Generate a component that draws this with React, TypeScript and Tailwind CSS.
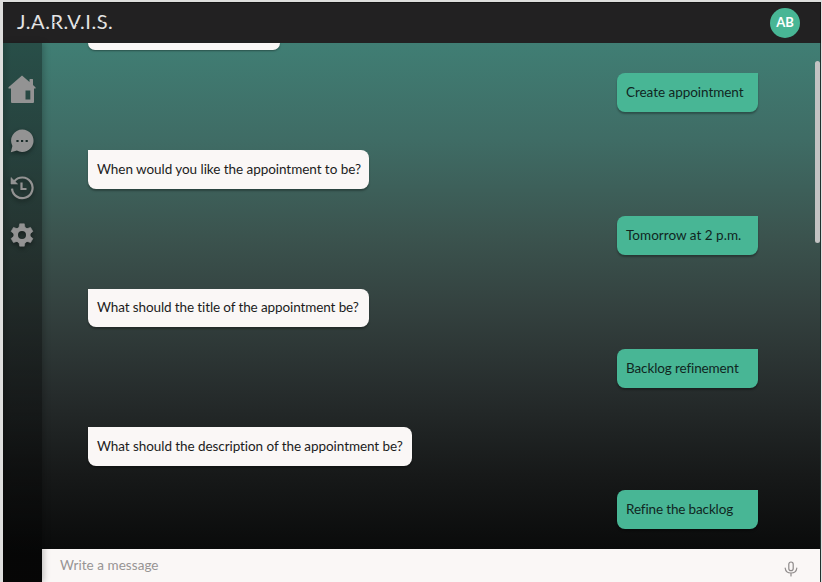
import React from "react";

type Message = {
  text: string;
  mine?: boolean;
  gap: string;
  width: string;
  tracking: string;
};

const messages: Message[] = [
  { text: "Create appointment", mine: true, gap: "mt-[23px]", width: "w-[141px]", tracking: "tracking-[-0.04px]" },
  { text: "When would you like the appointment to be?", gap: "mt-[38.5px]", width: "w-[281px]", tracking: "tracking-[-0.05px]" },
  { text: "Tomorrow at 2 p.m.", mine: true, gap: "mt-[27.5px]", width: "w-[141px]", tracking: "tracking-[0.02px]" },
  { text: "What should the title of the appointment be?", gap: "mt-[34px]", width: "w-[281px]", tracking: "tracking-[-0.11px]" },
  { text: "Backlog refinement", mine: true, gap: "mt-[22px]", width: "w-[141px]", tracking: "tracking-[-0.12px]" },
  { text: "What should the description of the appointment be?", gap: "mt-[39.5px]", width: "w-[324px]", tracking: "tracking-[-0.07px]" },
  { text: "Refine the backlog", mine: true, gap: "mt-[24.5px]", width: "w-[141px]", tracking: "tracking-[-0.14px]" },
];

function HomeIcon() {
  return (
    <svg className="h-[28px] w-[28px]" viewBox="0 0 28 28" fill="currentColor">
      <path
        fillRule="evenodd"
        d="M14 0.5 21.5 7V4.5Q21.5 4 22 4H24.5Q25 4 25 4.5V10L27.6 12.4V13.6H26V27Q26 28 25 28H4Q3 28 3 27V13.6H0.5V12.2ZM17.5 15.5V24.5H22.3V15.5Z"
      />
    </svg>
  );
}

function ChatIcon() {
  return (
    <svg className="h-[24px] w-[24px]" viewBox="0 0 24 24" fill="currentColor">
      <path
        fillRule="evenodd"
        d="M12.3 0.5a11.2 11.2 0 1 1-5.4 21L.8 23.2 2.4 17A11.2 11.2 0 0 1 12.3.5ZM6.4 11v2h2.2v-2Zm4.6 0v2h2.2v-2Zm4.6 0v2h2.2v-2Z"
      />
    </svg>
  );
}

function HistoryIcon() {
  return (
    <svg className="h-[24px] w-[24px]" viewBox="0 0 24 24" fill="none" stroke="currentColor">
      <path d="M4.2 5.4A10.3 10.3 0 1 1 2 12.6" strokeWidth="2.2" />
      <path d="M1 1.5V8H7.6Z" fill="currentColor" strokeWidth="0.6" />
      <path d="M11.5 6.5V13H16.5" strokeWidth="2.2" />
    </svg>
  );
}

function GearIcon() {
  return (
    <svg className="h-[24px] w-[24px]" viewBox="-12 -12 24 24" fill="none" stroke="currentColor">
      <circle r="6.3" strokeWidth="4.6" />
      {[0, 60, 120, 180, 240, 300].map((a) => (
        <path key={a} transform={`rotate(${a})`} d="M-2.3-11.2H2.3L3.1-7H-3.1Z" fill="currentColor" strokeWidth="0.6" strokeLinejoin="round" />
      ))}
    </svg>
  );
}

function MicIcon() {
  return (
    <svg className="h-[16px] w-[14px]" viewBox="0 0 14 16" fill="none" stroke="#8e8a8a" strokeWidth="1.2" strokeLinecap="round">
      <rect x="4.8" y="1" width="4.4" height="8.6" rx="2.2" />
      <path d="M1.2 7.2C1.6 10.4 4 12 7 12S12.4 10.4 12.8 7.2M7 12V15" />
    </svg>
  );
}

/* Narrow gaps laid over the wordmark give it a stencil cut. */
function StencilCuts() {
  return (
    <svg className="absolute top-0 left-0 h-[24px] w-[96px]" viewBox="0 0 96 24" stroke="#222122" strokeWidth="0.9">
      <path d="M14.5 13.2H19M36 13.5H40M59 15.5H63M83 14 91 10.5" />
    </svg>
  );
}

export default function App() {
  return (
    <div className="flex h-[582px] w-[822px] flex-col overflow-hidden border-t-2 border-r border-l-[3px] border-[#dededd] font-['Lato','Liberation_Sans',sans-serif]">
      <header className="flex h-[41px] shrink-0 items-center justify-between border-t border-r border-[#151515] bg-[#222122] pr-[20px] pl-[14px]">
        <div className="relative -mt-[4px]">
          <span className="block text-[20px] leading-[24px] tracking-[0.55px] whitespace-nowrap text-[#e4e4e4]">J.A.R.V.I.S.</span>
          <StencilCuts />
        </div>
        <div className="-mt-px flex h-[30px] w-[30px] items-center justify-center rounded-full bg-[#48b695] text-[13px] font-bold text-white">AB</div>
      </header>

      <div className="flex min-h-0 flex-1 border-r border-[#20302e] bg-[linear-gradient(to_bottom,#407e74_0%,#3f6c65_18%,#3b534e_36%,#33403e_50%,#262c2c_65%,#171919_80%,#090a0a_95%)]">
        <nav className="relative z-10 flex w-[39px] shrink-0 flex-col items-center bg-linear-to-r from-black/46 from-0% via-black/38 via-20% to-black/38 pt-[32px] pr-px text-[#939393] shadow-[2px_0_6px_rgba(0,0,0,0.22)]">
          <HomeIcon />
          <div className="mt-[26px] drop-shadow-[0_2px_2px_rgba(0,0,0,0.4)]"><ChatIcon /></div>
          <div className="mt-[23px] drop-shadow-[0_2px_2px_rgba(0,0,0,0.4)]"><HistoryIcon /></div>
          <div className="mt-[23px] drop-shadow-[0_2px_2px_rgba(0,0,0,0.4)]"><GearIcon /></div>
        </nav>

        <main className="flex min-w-0 flex-1 flex-col">
          <div className="flex min-h-0 flex-1">
            <section className="flex min-w-0 flex-1 flex-col overflow-hidden pr-[57px] pl-[46px]">
              <div className="h-[7px] w-[192px] shrink-0 rounded-b-[8px] bg-[#faf7f6] shadow-[0_1px_2px_rgba(0,0,0,0.35)]" />
              {messages.map((m) => (
                <div
                  key={m.text}
                  className={`flex h-[38.5px] shrink-0 items-center pb-px pl-[9px] text-[13.5px] whitespace-nowrap shadow-[0_2px_2px_rgba(0,0,0,0.3)] ${m.gap} ${m.width} ${m.tracking} ${
                    m.mine
                      ? "self-end rounded-[8px] rounded-tr-none bg-[#48b695] text-[#10261f]"
                      : "rounded-[8px] rounded-tl-none bg-[#faf7f6] text-[#1c1c1c]"
                  }`}
                >
                  <span>{m.text}</span>
                </div>
              ))}
            </section>
            <div className="mt-[18px] h-[182px] w-[5px] shrink-0 rounded-full bg-[#c3c3c3]" />
          </div>
          <footer className="flex h-[33px] shrink-0 items-center justify-between bg-[#faf7f6] pr-[22px] pl-[18px]">
            <span className="text-[13.5px] tracking-[0.05px] text-[#979494]">Write a message</span>
            <div className="pt-[6px]"><MicIcon /></div>
          </footer>
        </main>
      </div>
    </div>
  );
}
